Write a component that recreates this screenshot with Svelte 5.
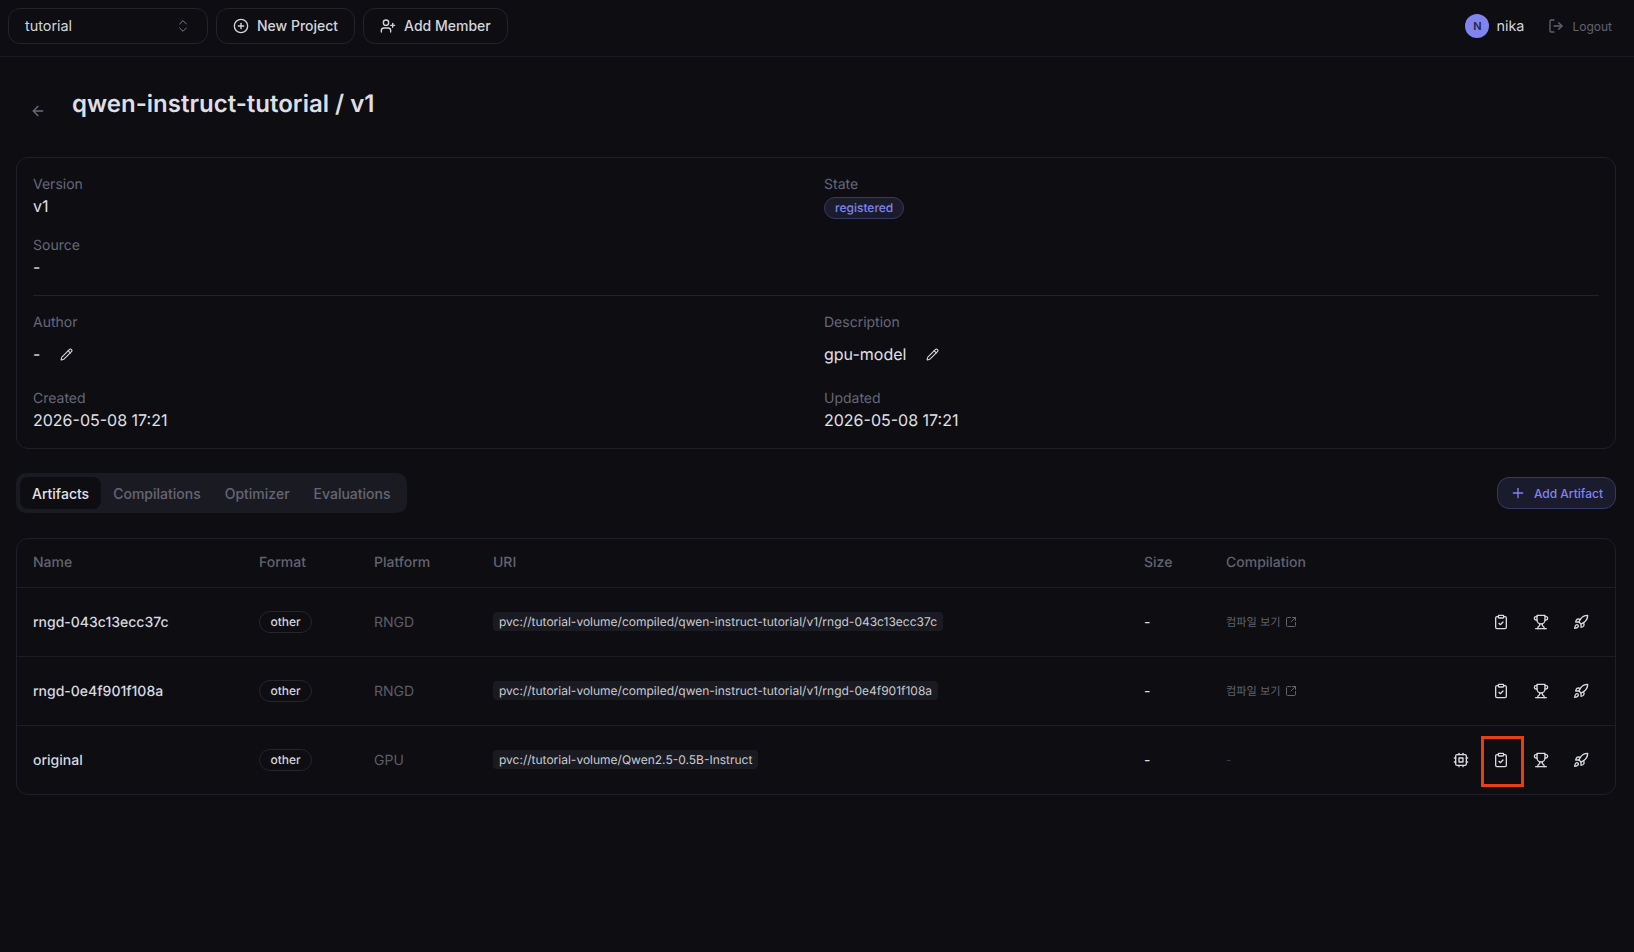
<script>
  const icons = {
    updown: '<path d="m7 15 5 5 5-5"/><path d="m7 9 5-5 5 5"/>',
    circlePlus: '<circle cx="12" cy="12" r="10"/><path d="M8 12h8"/><path d="M12 8v8"/>',
    userPlus: '<path d="M16 21v-2a4 4 0 0 0-4-4H6a4 4 0 0 0-4 4v2"/><circle cx="9" cy="7" r="4"/><path d="M19 8v6"/><path d="M22 11h-6"/>',
    arrowLeft: '<path d="m12 19-7-7 7-7"/><path d="M19 12H5"/>',
    logout: '<path d="m16 17 5-5-5-5"/><path d="M21 12H9"/><path d="M9 21H5a2 2 0 0 1-2-2V5a2 2 0 0 1 2-2h4"/>',
    pencil: '<path d="M21.174 6.812a1 1 0 0 0-3.986-3.987L3.842 16.174a2 2 0 0 0-.5.83l-1.321 4.352a.5.5 0 0 0 .623.622l4.353-1.32a2 2 0 0 0 .83-.497z"/><path d="m15 5 4 4"/>',
    plus: '<path d="M5 12h14"/><path d="M12 5v14"/>',
    external: '<path d="M21 13v6a2 2 0 0 1-2 2H5a2 2 0 0 1-2-2V5a2 2 0 0 1 2-2h6"/><path d="m21 3-9 9"/><path d="M15 3h6v6"/>',
    clipboard: '<rect x="8" y="2" width="8" height="4" rx="1"/><path d="M16 4h2a2 2 0 0 1 2 2v14a2 2 0 0 1-2 2H6a2 2 0 0 1-2-2V6a2 2 0 0 1 2-2h2"/><path d="m9 14 2 2 4-4"/>',
    trophy: '<path d="M6 9H4.5a2.5 2.5 0 0 1 0-5H6"/><path d="M18 9h1.5a2.5 2.5 0 0 0 0-5H18"/><path d="M4 22h16"/><path d="M10 14.66V17c0 .55-.47.98-.97 1.21C7.85 18.75 7 20.24 7 22"/><path d="M14 14.66V17c0 .55.47.98.97 1.21C16.15 18.75 17 20.24 17 22"/><path d="M18 2H6v7a6 6 0 0 0 12 0V2Z"/>',
    rocket: '<path d="M4.5 16.5c-1.5 1.26-2 5-2 5s3.74-.5 5-2c.71-.84.7-2.13-.09-2.91a2.18 2.18 0 0 0-2.91-.09z"/><path d="m12 15-3-3a22 22 0 0 1 2-3.95A12.88 12.88 0 0 1 22 2c0 2.72-.78 7.5-6 11a22.35 22.35 0 0 1-4 2z"/><path d="M9 12H4s.55-3.03 2-4c1.62-1.08 5 0 5 0"/><path d="M12 15v5s3.03-.55 4-2c1.08-1.62 0-5 0-5"/>',
    cpu: '<rect x="4" y="4" width="16" height="16" rx="2"/><rect x="9" y="9" width="6" height="6"/><path d="M15 2v2"/><path d="M15 20v2"/><path d="M2 15h2"/><path d="M2 9h2"/><path d="M20 15h2"/><path d="M20 9h2"/><path d="M9 2v2"/><path d="M9 20v2"/>',
  };

  const tabs = ["Artifacts", "Compilations", "Optimizer", "Evaluations"];
  let activeTab = $state("Artifacts");

  const artifacts = [
    {
      name: "rngd-043c13ecc37c",
      platform: "RNGD",
      uri: "pvc://tutorial-volume/compiled/qwen-instruct-tutorial/v1/rngd-043c13ecc37c",
      compiled: true,
    },
    {
      name: "rngd-0e4f901f108a",
      platform: "RNGD",
      uri: "pvc://tutorial-volume/compiled/qwen-instruct-tutorial/v1/rngd-0e4f901f108a",
      compiled: true,
    },
    {
      name: "original",
      platform: "GPU",
      uri: "pvc://tutorial-volume/Qwen2.5-0.5B-Instruct",
      compiled: false,
    },
  ];
</script>

{#snippet icon(name, size = 16, width = 2)}
  <svg
    xmlns="http://www.w3.org/2000/svg"
    width={size}
    height={size}
    viewBox="0 0 24 24"
    fill="none"
    stroke="currentColor"
    stroke-width={width}
    stroke-linecap="round"
    stroke-linejoin="round"
  >
    {@html icons[name]}
  </svg>
{/snippet}

<header class="topbar">
  <div class="left">
    <button class="btn select">
      <span>tutorial</span>
      <span class="updown">{@render icon("updown", 16, 1.5)}</span>
    </button>
    <button class="btn">{@render icon("circlePlus", 16)}New Project</button>
    <button class="btn">{@render icon("userPlus", 16)}Add Member</button>
  </div>
  <div class="right">
    <div class="user">
      <span class="avatar">N</span>
      <span>nika</span>
    </div>
    <button class="logout">{@render icon("logout", 16)}Logout</button>
  </div>
</header>

<main>
  <div class="title-row">
    <button class="back">{@render icon("arrowLeft", 16)}</button>
    <h1>qwen-instruct-tutorial / v1</h1>
  </div>

  <section class="card info">
    <div class="grid top">
      <div class="field">
        <span class="label">Version</span>
        <span class="value">v1</span>
      </div>
      <div class="field">
        <span class="label">State</span>
        <span class="badge">registered</span>
      </div>
      <div class="field">
        <span class="label">Source</span>
        <span class="value">-</span>
      </div>
    </div>
    <hr />
    <div class="grid lower">
      <div class="field">
        <span class="label">Author</span>
        <span class="value editable">-<span class="pencil">{@render icon("pencil", 13)}</span></span>
      </div>
      <div class="field">
        <span class="label">Description</span>
        <span class="value editable">gpu-model<span class="pencil">{@render icon("pencil", 13)}</span></span>
      </div>
      <div class="field">
        <span class="label">Created</span>
        <span class="value">2026-05-08 17:21</span>
      </div>
      <div class="field">
        <span class="label">Updated</span>
        <span class="value">2026-05-08 17:21</span>
      </div>
    </div>
  </section>

  <div class="toolbar">
    <div class="tabs">
      {#each tabs as tab}
        <button class="tab" class:active={activeTab === tab} onclick={() => (activeTab = tab)}>{tab}</button>
      {/each}
    </div>
    <button class="add">{@render icon("plus", 16)}Add Artifact</button>
  </div>

  <section class="card table">
    <div class="row head">
      <span>Name</span>
      <span>Format</span>
      <span>Platform</span>
      <span>URI</span>
      <span>Size</span>
      <span>Compilation</span>
    </div>
    {#each artifacts as item}
      <div class="row">
        <span class="name">{item.name}</span>
        <span><span class="format">other</span></span>
        <span class="platform">{item.platform}</span>
        <span><code>{item.uri}</code></span>
        <span class="size">-</span>
        {#if item.compiled}
          <span class="compile">컴파일 보기{@render icon("external", 12)}</span>
        {:else}
          <span class="compile none">-</span>
        {/if}
        <span class="actions">
          {#if !item.compiled}
            <span class="action">{@render icon("cpu", 16)}</span>
          {/if}
          <span class="action">{@render icon("clipboard", 16)}</span>
          <span class="action">{@render icon("trophy", 16)}</span>
          <span class="action">{@render icon("rocket", 16)}</span>
        </span>
        {#if !item.compiled}
          <span class="marker"></span>
        {/if}
      </div>
    {/each}
  </section>
</main>

<style>
  :global(body) {
    margin: 0;
    background: #0d0d12;
    color: #e6e7ed;
    font-family: Inter, "Noto Sans CJK KR", sans-serif;
    text-rendering: geometricPrecision;
    min-height: 952px;
  }
  button {
    font: inherit;
    color: inherit;
    background: none;
    border: none;
    padding: 0;
    cursor: pointer;
  }

  .topbar {
    height: 57px;
    box-sizing: border-box;
    border-bottom: 1px solid #191a20;
    padding: 8px 22px 12px 8px;
    display: flex;
    align-items: center;
    justify-content: space-between;
  }
  .left,
  .right {
    display: flex;
    align-items: center;
  }
  .left {
    gap: 8px;
  }
  .btn {
    height: 36px;
    box-sizing: border-box;
    border: 1px solid #22232b;
    border-radius: 12px;
    padding: 0 16px 1px;
    display: flex;
    align-items: center;
    gap: 8px;
    font-size: 14px;
    font-weight: 500;
    color: #d4d5dc;
  }
  .select {
    width: 200px;
    justify-content: space-between;
    font-size: 14.4px;
    font-weight: 400;
  }
  .updown {
    display: flex;
    color: #7d7e8b;
  }
  .user {
    display: flex;
    align-items: center;
    gap: 7px;
    font-size: 14.4px;
    color: #d5d6dd;
  }
  .avatar {
    width: 24px;
    height: 24px;
    border-radius: 50%;
    background: #8085ee;
    color: #23244a;
    font-size: 11px;
    font-weight: 600;
    display: flex;
    align-items: center;
    justify-content: center;
  }
  .logout {
    margin-left: 24px;
    display: flex;
    align-items: center;
    gap: 8px;
    font-size: 12px;
    color: #62636f;
  }

  main {
    padding: 0 18px 0 16px;
  }
  .title-row {
    height: 100px;
    display: flex;
    align-items: flex-start;
  }
  .back {
    display: flex;
    margin: 46px 0 0 14px;
    color: #6b6c79;
  }
  h1 {
    margin: 27px 0 0 26px;
    font-size: 24px;
    line-height: 40px;
    font-weight: 600;
    color: #dedfe6;
  }

  .card {
    border: 1px solid #1f2027;
    border-radius: 12px;
    background: #0d0d12;
  }
  .info {
    padding: 17px 16px 16px;
    height: 292px;
    box-sizing: border-box;
  }
  .grid {
    display: grid;
    grid-template-columns: 791px 1fr;
    row-gap: 17px;
  }
  .grid.lower {
    row-gap: 19px;
  }
  hr {
    border: none;
    border-top: 1px solid #23242b;
    margin: 17px 0;
  }
  .field {
    display: flex;
    flex-direction: column;
  }
  .label {
    font-size: 14px;
    line-height: 20px;
    color: #66677a;
  }
  .value {
    font-size: 16px;
    line-height: 22px;
    color: #e0e1e8;
  }
  .editable {
    display: flex;
    align-items: center;
    gap: 20px;
    height: 32px;
    margin-top: 5px;
  }
  .pencil {
    display: flex;
    color: #d9dae0;
  }
  .badge {
    align-self: flex-start;
    margin-top: 2px;
    font-size: 12px;
    line-height: 20px;
    font-weight: 500;
    padding: 0 10px;
    border: 1px solid #363962;
    border-radius: 999px;
    background: #1a1b2d;
    color: #8085ee;
  }

  .toolbar {
    display: flex;
    align-items: center;
    justify-content: space-between;
    margin: 24px 0 25px;
  }
  .tabs {
    display: flex;
    gap: 0;
    padding: 4px;
    border-radius: 10px;
    background: #1a1b22;
  }
  .tab {
    height: 32px;
    padding: 0 12px;
    border-radius: 8px;
    font-size: 14px;
    font-weight: 500;
    color: #656672;
  }
  .tab.active {
    background: #0d0d12;
    color: #e0e1e8;
  }
  .add {
    height: 32px;
    box-sizing: border-box;
    padding: 0 12px;
    display: flex;
    align-items: center;
    gap: 8px;
    border: 1px solid #363962;
    border-radius: 12px;
    background: #1a1b2d;
    color: #8085ee;
    font-size: 12px;
    font-weight: 500;
  }

  .row {
    position: relative;
    display: grid;
    grid-template-columns: 226px 115px 119px 651px 82px 1fr auto;
    align-items: center;
    height: 69px;
    box-sizing: border-box;
    padding: 0 18px 0 16px;
    font-size: 14px;
    border-top: 1px solid #1d1e25;
  }
  .row.head {
    height: 48px;
    padding-bottom: 2px;
    border-top: none;
    font-weight: 500;
    color: #62636f;
  }
  .name {
    font-weight: 500;
    color: #d8d9e0;
  }
  .format {
    display: inline-block;
    font-size: 12px;
    line-height: 20px;
    font-weight: 500;
    padding: 0 10.5px;
    border: 1px solid #24252d;
    border-radius: 999px;
    color: #d4d5dc;
  }
  .platform {
    color: #5c5d69;
  }
  code {
    display: inline-block;
    margin-bottom: 2px;
    font-family: inherit;
    font-size: 12px;
    line-height: 19px;
    padding: 0 6px;
    border-radius: 4px;
    background: #1a1b22;
    color: #c9cad1;
  }
  .size {
    color: #dfe0e6;
  }
  .compile {
    display: flex;
    align-items: center;
    gap: 4px;
    font-size: 11.2px;
    color: #62636f;
  }
  .compile.none {
    color: #3c3d47;
  }
  .actions {
    display: flex;
    gap: 8px;
    color: #d9dae0;
  }
  .action {
    width: 32px;
    height: 32px;
    display: flex;
    align-items: center;
    justify-content: center;
  }
  /* red highlight drawn over the screenshot */
  .marker {
    position: absolute;
    left: 1464px;
    top: 10px;
    width: 43px;
    height: 51px;
    box-sizing: border-box;
    border: 3px solid #e63e16;
  }
</style>
